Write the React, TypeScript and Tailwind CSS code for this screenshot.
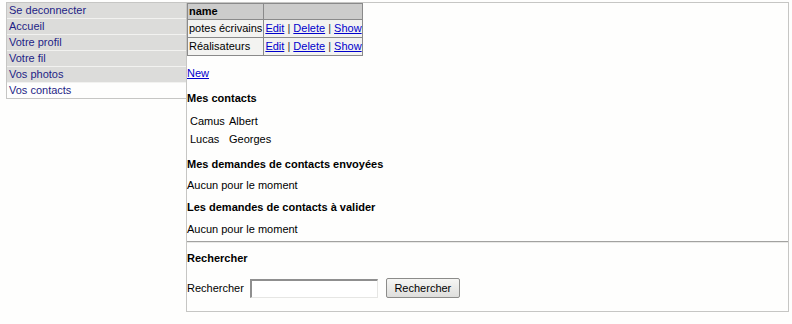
const menu = [
  { label: 'Se deconnecter', active: false },
  { label: 'Accueil', active: false },
  { label: 'Votre profil', active: false },
  { label: 'Votre fil', active: false },
  { label: 'Vos photos', active: false },
  { label: 'Vos contacts', active: true },
];

const groups = ['potes écrivains', 'Réalisateurs'];

const contacts = [
  { last: 'Camus', first: 'Albert' },
  { last: 'Lucas', first: 'Georges' },
];

function Actions() {
  return (
    <span className="text-[#333]">
      <a className="text-[#0000cc] underline">Edit</a> |{' '}
      <a className="text-[#0000cc] underline">Delete</a> |{' '}
      <a className="text-[#0000cc] underline">Show</a>
    </span>
  );
}

export default function App() {
  return (
    <div
      className="w-[792px] h-[324px] bg-[#fefefd] text-[11px] text-black"
      style={{ fontFamily: '"Liberation Sans", Arial, sans-serif' }}
    >
      <div className="flex items-start pt-[2px] pl-[6px]">
        {/* menu */}
        <nav className="w-[180px] border border-[#c6c6c4] border-r-0">
          {menu.map((item, i) => (
            <div
              key={item.label}
              className={`pl-[2px] text-[#1e1e86] ${
                i < menu.length - 1 ? 'h-[16px] leading-[15px] border-b border-[#f2f2f0]' : 'h-[15px] leading-[15px]'
              } ${item.active ? 'bg-[#fefefd]' : 'bg-[#dcdcda]'}`}
            >
              {item.label}
            </div>
          ))}
        </nav>

        {/* main */}
        <main className="w-[603px] h-[310px] border border-[#c6c6c4] flex flex-col">
          <table className="border-collapse border border-[#8a8a8a] self-start">
            <thead>
              <tr className="bg-[#cccccb] h-[16px]">
                <th className="border border-[#8a8a8a] text-left font-bold pl-[1px] pr-[1px] py-0 leading-[13px]">name</th>
                <th className="border border-[#8a8a8a]"></th>
              </tr>
            </thead>
            <tbody>
              {groups.map((g) => (
                <tr key={g} className="bg-[#f3f3f1] h-[18px]">
                  <td className="border border-[#8a8a8a] pl-[1px] pr-[1px] py-0 leading-[13px] whitespace-nowrap">{g}</td>
                  <td className="border border-[#8a8a8a] pl-[1px] pr-0 py-0 leading-[13px] whitespace-nowrap">
                    <Actions />
                  </td>
                </tr>
              ))}
            </tbody>
          </table>

          <a className="mt-[11px] leading-[13px] text-[#0000cc] underline self-start">New</a>

          <h3 className="mt-[12px] leading-[13px] font-bold">Mes contacts</h3>

          <div className="mt-[10px] flex flex-col gap-[5px]">
            {contacts.map((c) => (
              <div key={c.last} className="flex leading-[13px]">
                <span className="w-[42px] pl-[3px]">{c.last}</span>
                <span>{c.first}</span>
              </div>
            ))}
          </div>

          <h3 className="mt-[12px] leading-[13px] font-bold">Mes demandes de contacts envoyées</h3>
          <p className="mt-[8px] leading-[13px]">Aucun pour le moment</p>
          <h3 className="mt-[9px] leading-[13px] font-bold">Les demandes de contacts à valider</h3>
          <p className="mt-[9px] leading-[13px]">Aucun pour le moment</p>

          <div className="mt-[5px] border-t border-[#a2a2a0] border-b border-b-[#e9e9e7]"></div>

          <h3 className="mt-[9px] leading-[13px] font-bold">Rechercher</h3>

          <form className="mt-[13px] flex items-center">
            <label className="leading-[13px]">Rechercher</label>
            <input
              type="text"
              className="ml-[6px] w-[128px] h-[19px] bg-white border-t-2 border-l-2 border-r border-b border-t-[#8f8f8f] border-l-[#8f8f8f] border-r-[#e6e6e4] border-b-[#e6e6e4] outline-none"
            />
            <button
              type="button"
              className="ml-[8px] w-[74px] h-[20px] rounded-[2px] border border-[#8c8c8a] bg-gradient-to-b from-[#f6f6f4] to-[#dededc] text-[11px] text-black"
            >
              Rechercher
            </button>
          </form>
        </main>
      </div>
    </div>
  );
}
